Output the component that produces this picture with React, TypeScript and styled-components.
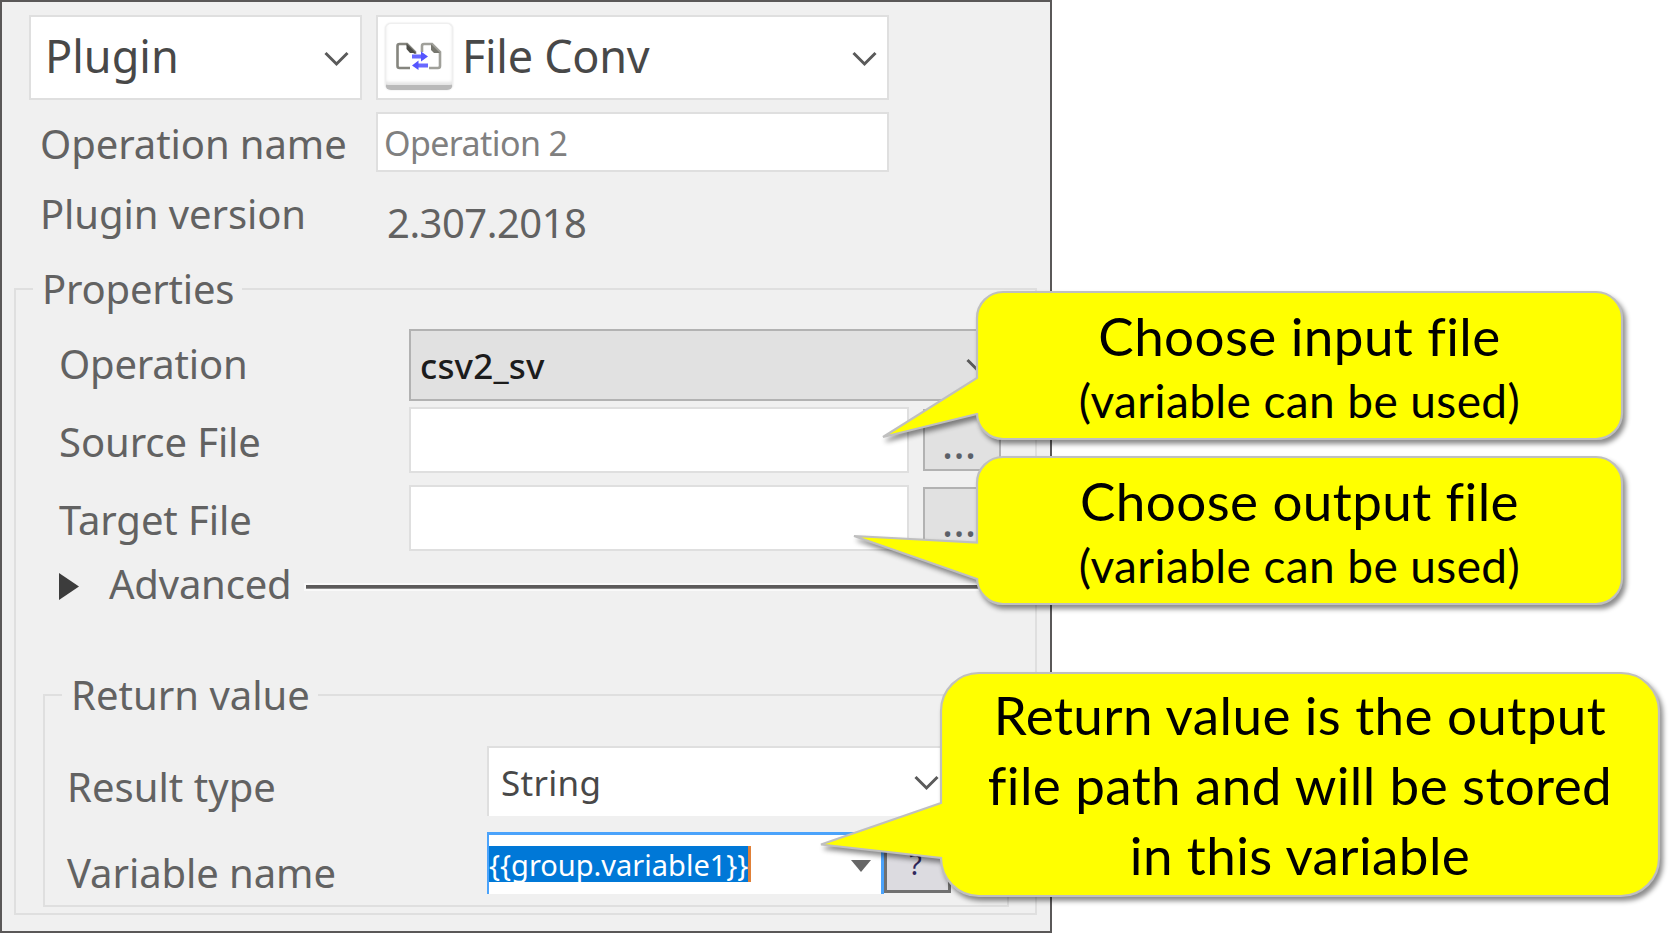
import React from "react";
import styled, { createGlobalStyle } from "styled-components";

const GlobalStyle = createGlobalStyle`
  html, body { margin: 0; padding: 0; background: #ffffff; overflow: hidden; }
  *, *::before, *::after { box-sizing: border-box; }
`;

const Screen = styled.main`
  position: relative;
  width: 1678px;
  height: 938px;
  overflow: hidden;
  font-family: "Noto Sans", sans-serif;
`;

const Panel = styled.section`
  width: 1052px;
  height: 933px;
  padding-top: 13px;
  background: #f0f0f0;
  border: 2px solid #5a5858;
`;

const Row = styled.div<{ $top?: number; $left?: number; $gap?: number }>`
  display: flex;
  align-items: flex-start;
  gap: ${(p) => p.$gap ?? 0}px;
  margin-top: ${(p) => p.$top ?? 0}px;
  margin-left: ${(p) => p.$left ?? 0}px;
`;

const Label = styled.label<{ $width?: number; $top?: number; $spacing?: number }>`
  flex: none;
  width: ${(p) => (p.$width ? `${p.$width}px` : "auto")};
  margin-top: ${(p) => p.$top ?? 0}px;
  font-size: 40px;
  line-height: 52px;
  letter-spacing: ${(p) => p.$spacing ?? -0.08}px;
  color: #626262;
  white-space: nowrap;
`;

const Field = styled.div<{ $w: number; $h: number; $open?: boolean }>`
  flex: none;
  display: flex;
  align-items: center;
  width: ${(p) => p.$w}px;
  height: ${(p) => p.$h}px;
  background: #ffffff;
  border: 2px solid #dfdfdf;
  ${(p) => p.$open && "border-bottom: none;"}
`;

const GreySelect = styled(Field)`
  background: #e1e1e1;
  border: 2px solid #b2b2b2;
`;

const Value = styled.span<{ $size: number; $left: number; $spacing?: number; $color?: string; $lift?: number; $weight?: number }>`
  flex: 1;
  padding-left: ${(p) => p.$left}px;
  margin-bottom: ${(p) => p.$lift ?? 0}px;
  font-size: ${(p) => p.$size}px;
  font-weight: ${(p) => p.$weight ?? 400};
  line-height: 50px;
  letter-spacing: ${(p) => p.$spacing ?? 0}px;
  color: ${(p) => p.$color ?? "#484848"};
  white-space: nowrap;
`;

const Chevron = styled.svg<{ $right: number }>`
  flex: none;
  width: 25px;
  height: 16px;
  margin: 2px ${(p) => p.$right}px 0 0;
  fill: none;
  stroke: #5a5a5a;
  stroke-width: 3;
`;

const IconTile = styled.span`
  flex: none;
  display: flex;
  justify-content: center;
  width: 68px;
  height: 67px;
  margin: 0 0 2px 7px;
  padding-top: 18px;
  background: #ffffff;
  border-radius: 6px;
  border: 1px solid #efefef;
  border-bottom: 5px solid #b9b9b9;
  box-shadow: 0 0 2px rgba(0, 0, 0, 0.14), inset 0 -3px 3px rgba(0, 0, 0, 0.1);
`;

const Group = styled.fieldset<{ $w: number; $h: number; $top: number; $left: number }>`
  width: ${(p) => p.$w}px;
  height: ${(p) => p.$h}px;
  margin: ${(p) => `${p.$top}px 0 0 ${p.$left}px`};
  padding: 0 0 0 17px;
  border: 2px solid #dfdfdf;
  min-width: 0;
`;

const Legend = styled.legend<{ $spacing: number }>`
  padding: 0 8px 0 9px;
  font-size: 40px;
  line-height: 52px;
  letter-spacing: ${(p) => p.$spacing}px;
  color: #626262;
`;

const BrowseButton = styled.button<{ $top: number }>`
  flex: none;
  width: 78px;
  height: 62px;
  margin: ${(p) => p.$top}px 0 0;
  padding: 7px 5px 0 0;
  background: #e1e1e1;
  border: 2px solid #b2b2b2;
  font: 500 39px/52px "Noto Sans", sans-serif;
  letter-spacing: 0.9px;
  color: #5b6068;
`;

const Arrow = styled.svg`
  flex: none;
  width: 20px;
  height: 27px;
  margin-top: 15px;
  fill: #3c3c3c;
`;

const Rule = styled.div`
  width: 694px;
  height: 4px;
  margin-top: 27px;
  background: #5c5a5a;
  border-bottom: 1px solid #8a8a8a;
  box-shadow: 0 0 0 2px #f9f9f9;
`;

const Combo = styled.div`
  flex: none;
  display: flex;
  width: 397px;
  height: 62px;
  background: #ffffff;
  border: solid #4ba3fb;
  border-width: 3px 3px 0 2px;
`;

const Selection = styled.span`
  flex: none;
  width: 262px;
  height: 36px;
  margin-top: 11px;
  background: #0078d7;
  border-right: 3px solid #e08038;
  font-size: 29px;
  line-height: 38px;
  color: #ffffff;
  white-space: nowrap;
`;

const DropArrow = styled.svg`
  margin: 25px 0 0 100px;
  width: 20px;
  height: 12px;
  fill: #666666;
`;

const HelpButton = styled.button`
  flex: none;
  width: 67px;
  height: 61px;
  padding: 2px 4px 0 0;
  background: #dcdbe0;
  border: 3px solid #707070;
  font: 29px/40px "Noto Sans", sans-serif;
  color: #30285c;
`;

const CalloutBox = styled.div<{ $x: number; $y: number; $w: number; $h: number }>`
  position: absolute;
  left: ${(p) => p.$x}px;
  top: ${(p) => p.$y}px;
  width: ${(p) => p.$w}px;
  height: ${(p) => p.$h}px;
  padding-top: ${(p) => (p.$h > 200 ? 8 : 9)}px;
  font-family: Lato, sans-serif;
  text-align: center;
  color: #000000;
`;

const Bubble = styled.svg`
  position: absolute;
  left: 0;
  top: 0;
  width: 100%;
  height: 100%;
  overflow: visible;
  fill: #ffff00;
  stroke: #bfbfbf;
  stroke-width: 2.2;
  filter: drop-shadow(3px 4px 2.5px rgba(0, 0, 0, 0.45));
`;

const CalloutLine = styled.div<{ $size: number; $height: number }>`
  position: relative;
  font-size: ${(p) => p.$size}px;
  line-height: ${(p) => p.$height}px;
  letter-spacing: 0.4px;
  white-space: nowrap;
`;

type CalloutProps = {
  x: number; y: number; w: number; h: number; r: number;
  tail: [number, number, number, number];
  children: React.ReactNode;
};

/* tail: upper joint y, tip x, tip y, lower joint y, relative to the bubble */
function Callout({ x, y, w, h, r, tail, children }: CalloutProps) {
  const [upper, tipX, tipY, lower] = tail;
  const d = `M${r + 1} 1H${w - r - 1}A${r} ${r} 0 0 1 ${w - 1} ${r + 1}V${h - r - 1}A${r} ${r} 0 0 1 ${w - r - 1} ${h - 1}H${r + 1}A${r} ${r} 0 0 1 1 ${h - r - 1}V${lower}L${tipX} ${tipY}L1 ${upper}V${r + 1}A${r} ${r} 0 0 1 ${r + 1} 1Z`;
  return (
    <CalloutBox $x={x} $y={y} $w={w} $h={h}>
      <Bubble><path d={d} /></Bubble>
      {children}
    </CalloutBox>
  );
}

const ChevronDown = ({ right }: { right: number }) => (
  <Chevron $right={right} viewBox="0 0 25 16"><path d="M1.5 2L12.5 13L23.5 2" /></Chevron>
);

const FileConvIcon = () => (
  <svg width="46" height="28" viewBox="0 0 46 28" fill="none">
    <path d="M14 26H3.500Q1.500 26 1.500 24V4Q1.500 2 3.500 2H11L19 10V12" stroke="#85857e" strokeWidth="2.6" />
    <path d="M10.500 1.500L20 11H14L10.500 7Z" fill="#4c4c46" />
    <path d="M26 10V4Q26 2 28 2H36L44 10V24Q44 26 42 26H33" stroke="#a0a09a" strokeWidth="2.6" />
    <path d="M35 2L44 11H38L35 8Z" fill="#77776f" />
    <path d="M16 14.500H26M21 23.500H32" stroke="#6868ff" strokeWidth="4" />
    <path d="M25 9.500L32 14.500L25 19.500ZM22.500 18.500L16 23.500L22.500 28Z" fill="#5555ff" />
  </svg>
);

export default function App() {
  return (
    <Screen>
      <GlobalStyle />
      <Panel>
        <Row $left={27} $gap={14}>
          <Field $w={333} $h={85}>
            <Value $size={45} $left={14} $spacing={0} $lift={3}>Plugin</Value>
            <ChevronDown right={11} />
          </Field>
          <Field $w={513} $h={85}>
            <IconTile><FileConvIcon /></IconTile>
            <Value $size={45} $left={9} $spacing={-0.3} $lift={3}>File Conv</Value>
            <ChevronDown right={10} />
          </Field>
        </Row>
        <Row $left={38} $top={12}>
          <Label $width={336} $top={6}>Operation name</Label>
          <Field $w={513} $h={60}>
            <Value $size={34} $left={6} $spacing={-0.6} $color="#808080" $lift={-1}>Operation 2</Value>
          </Field>
        </Row>
        <Row $left={38} $top={16}>
          <Label $width={347}>Plugin version</Label>
          <Label as="span" $top={9} $spacing={-0.5}>2.307.2018</Label>
        </Row>

        <Group $w={1023} $h={652} $top={14} $left={12}>
          <Legend $spacing={-0.2}>Properties</Legend>
          <Row $top={14} $left={26}>
            <Label $width={350} $top={9} $spacing={-0.2}>Operation</Label>
            <GreySelect $w={592} $h={72}>
              <Value $size={35} $left={9} $spacing={0.2} $color="#1c1c1c" $lift={-2} $weight={500}>csv2_sv</Value>
              <ChevronDown right={8} />
            </GreySelect>
          </Row>
          <Row $top={6} $left={26}>
            <Label $width={350} $top={9}>Source File</Label>
            <Field $w={500} $h={66} />
            <Row $left={14}><BrowseButton $top={2}>...</BrowseButton></Row>
          </Row>
          <Row $top={12} $left={26}>
            <Label $width={350} $top={9}>Target File</Label>
            <Field $w={500} $h={66} />
            <Row $left={14}><BrowseButton $top={2}>...</BrowseButton></Row>
          </Row>
          <Row $top={7} $left={26}>
            <Arrow viewBox="0 0 20 27"><path d="M0 0L20 13.500L0 27Z" /></Arrow>
            <Row $left={30} $gap={15}>
              <Label $spacing={-0.2}>Advanced</Label>
              <Rule />
            </Row>
          </Row>

          <Group $w={966} $h={238} $top={59} $left={10}>
            <Legend $spacing={0.03}>Return value</Legend>
            <Row $top={25} $left={5}>
              <Label $width={420} $top={15} $spacing={0.04}>Result type</Label>
              <Field $w={464} $h={70} $open>
                <Value $size={35} $left={12} $spacing={0.3} $lift={-2}>String</Value>
                <ChevronDown right={10} />
              </Field>
            </Row>
            <Row $top={16} $left={5}>
              <Label $width={420} $top={15}>Variable name</Label>
              <Combo>
                <Selection>{"{{group.variable1}}"}</Selection>
                <DropArrow viewBox="0 0 20 12"><path d="M0 0H20L10 12Z" /></DropArrow>
              </Combo>
              <HelpButton>?</HelpButton>
            </Row>
          </Group>
        </Group>
      </Panel>

      <Callout x={976} y={291} w={647} h={149} r={26} tail={[87, -93, 146, 123]}>
        <CalloutLine $size={53} $height={72}>Choose input file</CalloutLine>
        <CalloutLine $size={46} $height={58}>(variable can be used)</CalloutLine>
      </Callout>
      <Callout x={976} y={456} w={647} h={149} r={26} tail={[86.500, -122, 80, 123]}>
        <CalloutLine $size={53} $height={72}>Choose output file</CalloutLine>
        <CalloutLine $size={46} $height={58}>(variable can be used)</CalloutLine>
      </Callout>
      <Callout x={940} y={672} w={720} h={225} r={38} tail={[131, -119, 172.500, 186]}>
        <CalloutLine $size={53} $height={70}>Return value is the output</CalloutLine>
        <CalloutLine $size={53} $height={70}>file path and will be stored</CalloutLine>
        <CalloutLine $size={53} $height={70}>in this variable</CalloutLine>
      </Callout>
    </Screen>
  );
}
